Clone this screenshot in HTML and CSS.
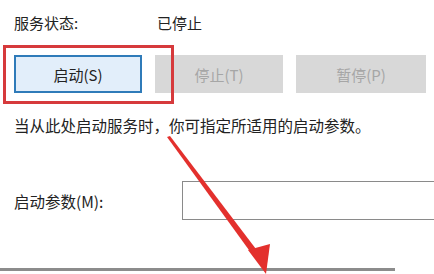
FILE: index.html
```html
<!DOCTYPE html>
<html lang="zh-CN">
  <head>
    <meta charset="UTF-8" />
    <meta name="viewport" content="width=device-width, initial-scale=1.0" />
    <title>服务属性</title>
    <link rel="stylesheet" href="styles.css">
  </head>
  <body>
    <div class="panel">
      <div class="status">
        <span class="status-label">服务状态:</span>
        <span class="status-value">已停止</span>
      </div>

      <div class="buttons">
        <button class="btn btn-active">启动(S)</button>
        <button class="btn" disabled>停止(T)</button>
        <button class="btn btn-wide" disabled>暂停(P)</button>
      </div>

      <p class="hint">当从此处启动服务时，你可指定所适用的启动参数。</p>

      <div class="param">
        <label for="startParam">启动参数(M):</label>
        <input type="text" id="startParam" />
      </div>

      <div class="divider"></div>

      <!-- annotation marks -->
      <div class="highlight"></div>
      <svg class="arrow" width="434" height="274" viewBox="0 0 434 274">
        <polygon points="167,137 170,136 259,253 254,257" fill="#e3302d" />
        <polygon points="248,250 270,244 266,274" fill="#e3302d" />
      </svg>
    </div>
  </body>
</html>
```

FILE: styles.css
```css
* {
  margin: 0;
  padding: 0;
  box-sizing: border-box;
}

body {
  font-family: "Noto Sans CJK SC", "Noto Sans", sans-serif;
  background-color: #ffffff;
  color: #222;
  width: 434px;
  height: 274px;
  overflow: hidden;
}

.panel {
  position: relative;
  height: 274px;
  padding: 13px 0 0 14px;
}

.status {
  display: flex;
  font-size: 15px;
  line-height: 20px;
}

.status-label {
  width: 143px;
}

.buttons {
  display: flex;
  gap: 13px;
  margin-top: 22px;
}

.btn {
  width: 128px;
  height: 38px;
  border: none;
  background-color: #d8d8d8;
  color: #a6a6a6;
  font-family: inherit;
  font-size: 15px;
}

.btn-wide {
  width: 130px;
}

.btn-active {
  background-color: #e2eefa;
  border: 2px solid #2f7bb9;
  color: #222;
}

.hint {
  margin-top: 22px;
  font-size: 15.5px;
  line-height: 20px;
}

.param {
  display: flex;
  align-items: center;
  margin-top: 46px;
}

.param label {
  flex-shrink: 0;
  width: 168px;
  font-size: 15.5px;
}

.param input {
  flex: 1;
  min-width: 0;
  height: 39px;
  border: 1px solid #8a8a8a;
  border-right: none;
  outline: none;
}

.divider {
  width: 395px;
  height: 3px;
  margin: 48px 0 0 -14px;
  background-color: #8c8c8c;
}

.highlight {
  position: absolute;
  left: 3px;
  top: 45px;
  width: 171px;
  height: 59px;
  border: 3px solid #d63a3c;
}

.arrow {
  position: absolute;
  left: 0;
  top: 0;
}
```
